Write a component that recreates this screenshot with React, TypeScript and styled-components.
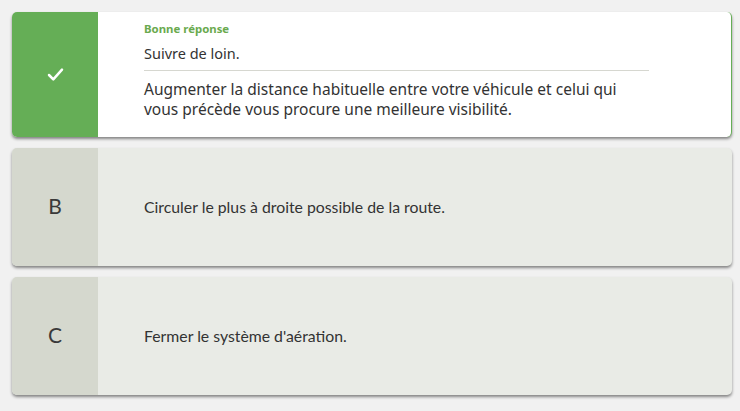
import styled, { createGlobalStyle } from 'styled-components';

const GlobalStyle = createGlobalStyle`
  body {
    margin: 0;
    background: #f1f1f1;
    font-family: Lato, 'Liberation Sans', sans-serif;
  }
`;

const List = styled.div`
  display: flex;
  flex-direction: column;
  gap: 11px;
  padding: 12px 8px 12px 12px;
`;

const Card = styled.div<{ $correct?: boolean }>`
  display: flex;
  min-height: ${(p) => (p.$correct ? '125px' : '118px')};
  border-radius: 5px;
  overflow: hidden;
  background: ${(p) => (p.$correct ? '#ffffff' : '#e9ebe6')};
  border-right: ${(p) => (p.$correct ? '1px solid #66ae56' : 'none')};
  box-shadow: 0 2px 3px rgba(0, 0, 0, 0.45);
`;

const Side = styled.div<{ $correct?: boolean }>`
  flex: 0 0 86px;
  display: flex;
  align-items: center;
  justify-content: center;
  background: ${(p) => (p.$correct ? '#65ae56' : '#d5d8ce')};
  color: #3a3a3a;
  font-size: 21px;
  padding-bottom: ${(p) => (p.$correct ? '0' : '3px')};
`;

const Body = styled.div`
  flex: 1;
  display: flex;
  flex-direction: column;
  justify-content: center;
  padding: 0 82px 2px 46px;
  color: #333;
  font-size: 15.8px;
`;

const Answer = styled.div`
  flex: 1;
  display: flex;
  flex-direction: column;
  padding: 10px 82px 0 46px;
  color: #333;
  font-family: 'Noto Sans', 'Open Sans', sans-serif;
`;

const Label = styled.div`
  color: #6aaa4e;
  font-weight: 700;
  font-size: 11.4px;
  line-height: 14px;
`;

const Title = styled.div`
  font-size: 14.5px;
  line-height: 20px;
  margin-top: 7px;
  padding-bottom: 7px;
  border-bottom: 1px solid #d6d7d0;
`;

const Explain = styled.div`
  font-size: 15.5px;
  line-height: 20px;
  margin-top: 8px;
`;

function Check() {
  return (
    <svg width="17" height="15" viewBox="0 0 17 15">
      <path d="M2 8 L6.3 12.3 L15 2.7" fill="none" stroke="#fff" strokeWidth="2.5" strokeLinecap="round" strokeLinejoin="round" />
    </svg>
  );
}

const options = [
  { letter: 'B', text: 'Circuler le plus à droite possible de la route.' },
  { letter: 'C', text: "Fermer le système d'aération." },
];

export default function App() {
  return (
    <>
      <GlobalStyle />
      <List>
        <Card $correct>
          <Side $correct>
            <Check />
          </Side>
          <Answer>
            <Label>Bonne réponse</Label>
            <Title>Suivre de loin.</Title>
            <Explain>
              Augmenter la distance habituelle entre votre véhicule et celui qui vous précède vous
              procure une meilleure visibilité.
            </Explain>
          </Answer>
        </Card>
        {options.map((o) => (
          <Card key={o.letter}>
            <Side>{o.letter}</Side>
            <Body>{o.text}</Body>
          </Card>
        ))}
      </List>
    </>
  );
}
